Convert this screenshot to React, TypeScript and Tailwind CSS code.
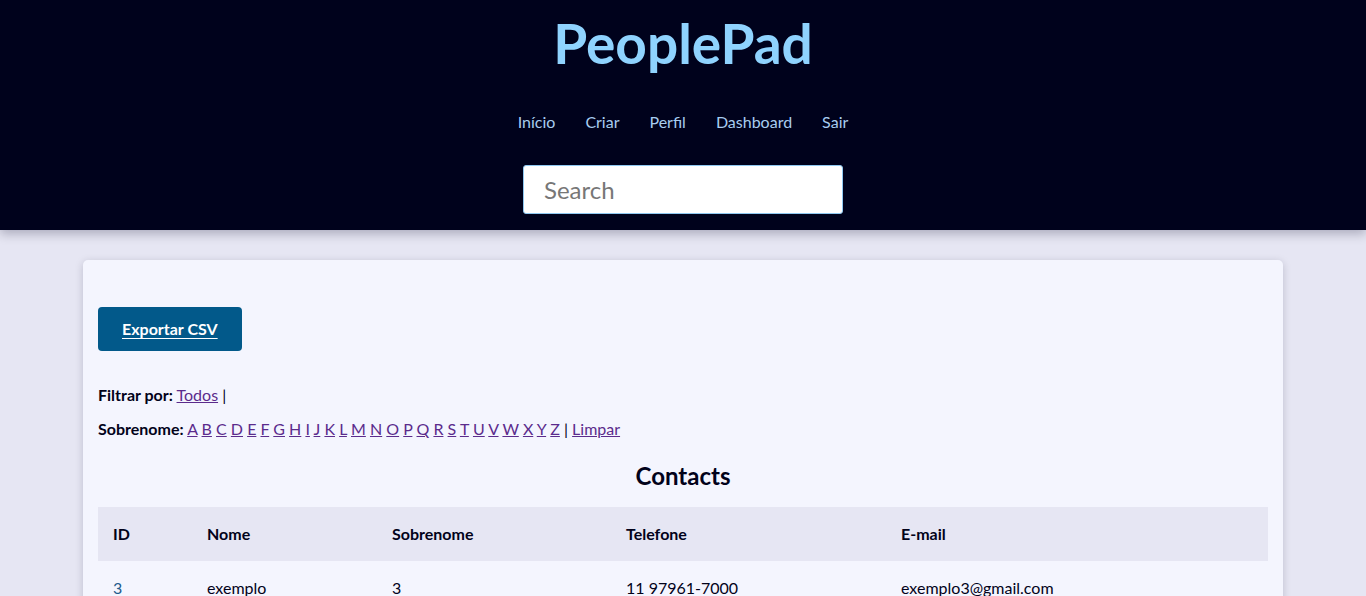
import React from 'react';

const letters = 'ABCDEFGHIJKLMNOPQRSTUVWXYZ'.split('');

const contacts = [
  { id: 3, nome: 'exemplo', sobrenome: '3', telefone: '11 97961-7000', email: 'exemplo3@gmail.com' },
];

export default function App() {
  return (
    <div className="min-h-screen bg-[#e6e6f3] text-[#02021a] font-['Lato','Open_Sans',sans-serif]">
      {/* Top bar */}
      <header className="bg-[#00021c] flex flex-col items-center pt-[11px] pb-[16px] shadow-[0_4px_10px_rgba(0,0,30,0.25)] relative z-10">
        <h1 className="text-[55px] leading-[64px] font-bold text-[#8fd3fe]">PeoplePad</h1>
        <nav className="flex gap-[30px] mt-[37px] text-[16px] leading-[20px] text-[#a8cdf0]">
          <a href="#">Início</a>
          <a href="#">Criar</a>
          <a href="#">Perfil</a>
          <a href="#">Dashboard</a>
          <a href="#">Sair</a>
        </nav>
        <input
          type="text"
          placeholder="Search"
          className="mt-[33px] w-[320px] h-[49px] bg-white rounded-[3px] border border-[#8fc8f0] px-[20px] text-[24px] text-[#333] placeholder:text-[#777] outline-none"
        />
      </header>

      {/* Main card */}
      <main className="w-[1200px] mx-auto mt-[30px] bg-[#f4f5fe] rounded-[5px] shadow-[0_2px_8px_rgba(0,0,40,0.18)] px-[15px] pt-[47px] pb-[20px]">
        <button className="h-[44px] px-[24px] rounded-[4px] bg-[#02598a] text-white font-bold text-[16px] underline underline-offset-[3px]">
          Exportar CSV
        </button>

        <p className="mt-[34px] text-[16px] leading-[20px]">
          <b>Filtrar por:</b> <a href="#" className="text-[#5b2b8c] underline">Todos</a> |
        </p>
        <p className="mt-[14px] text-[16px] leading-[20px]">
          <b>Sobrenome:</b>{' '}
          {letters.map((l) => (
            <React.Fragment key={l}>
              <a href="#" className="text-[#5b2b8c] underline">{l}</a>{' '}
            </React.Fragment>
          ))}
          | <a href="#" className="text-[#5b2b8c] underline">Limpar</a>
        </p>

        <h2 className="mt-[22px] text-center text-[24px] leading-[30px] font-bold">Contacts</h2>

        <table className="mt-[16px] w-full text-[16px] text-left border-collapse">
          <thead className="bg-[#e6e6f3]">
            <tr className="h-[54px]">
              <th className="w-[94px] px-[15px] font-bold">ID</th>
              <th className="w-[185px] px-[15px] font-bold">Nome</th>
              <th className="w-[234px] px-[15px] font-bold">Sobrenome</th>
              <th className="w-[275px] px-[15px] font-bold">Telefone</th>
              <th className="px-[15px] font-bold">E-mail</th>
            </tr>
          </thead>
          <tbody>
            {contacts.map((c) => (
              <tr key={c.id} className="h-[54px]">
                <td className="px-[15px]">
                  <a href="#" className="text-[#1d5b8c]">{c.id}</a>
                </td>
                <td className="px-[15px]">{c.nome}</td>
                <td className="px-[15px]">{c.sobrenome}</td>
                <td className="px-[15px]">{c.telefone}</td>
                <td className="px-[15px]">{c.email}</td>
              </tr>
            ))}
          </tbody>
        </table>
      </main>
    </div>
  );
}
